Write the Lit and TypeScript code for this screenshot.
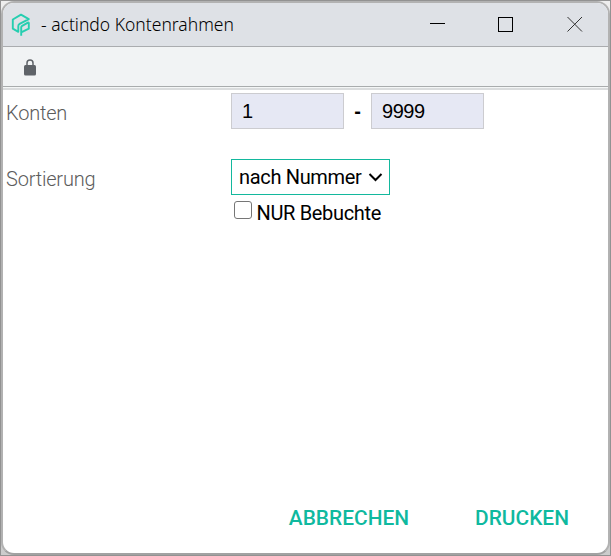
import { LitElement, html, css } from "lit";
import { customElement } from "lit/decorators.js";

@customElement("app-root")
class AppRoot extends LitElement {
  static styles = css`
    :host {
      display: block;
      box-sizing: border-box;
      width: 611px;
      height: 556px;
      padding: 0;
      border: 1px solid #929292;
      background: linear-gradient(#eeeeee, #cccccc);
      font-family: Roboto, "Liberation Sans", sans-serif;
      font-size: 20px;
      line-height: 24px;
      color: #000;
    }
    .window {
      box-sizing: border-box;
      height: 554px;
      border: 2px solid #b2b2b2;
      border-bottom-color: #a2a2a2;
      border-radius: 13px;
      background: #fff;
      overflow: hidden;
      display: flex;
      flex-direction: column;
    }
    .titlebar {
      box-sizing: border-box;
      height: 44px;
      flex: none;
      background: #dee1e6;
      border-bottom: 1px solid #aaacaf;
      display: flex;
      align-items: center;
      padding: 0 25px 0 8px;
    }
    .logo { flex: none; margin-top: 1px; }
    .title {
      flex: 1;
      margin: -2px 0 0 10px;
      font-family: "Noto Sans", "Open Sans", sans-serif;
      font-size: 17.5px;
      font-weight: 350;
      white-space: pre;
    }
    .controls { flex: none; display: block; margin-top: -2px; }
    .address {
      box-sizing: border-box;
      height: 40px;
      flex: none;
      background: #f1f3f4;
      border-bottom: 1px solid #a9acad;
      padding: 12px 0 0 21px;
    }
    .address svg { display: block; }
    .edge {
      height: 1px;
      flex: none;
      background: #f4f6f6;
      border-bottom: 2px solid #dadcdd;
    }
    .form {
      flex: 1;
      display: grid;
      grid-template-columns: 225px auto;
      grid-template-rows: 36px 36px;
      row-gap: 30px;
      padding: 3px 0 0 3px;
      align-content: start;
    }
    .label {
      font-weight: 300;
      color: #5c5c5c;
      padding-top: 8px;
      letter-spacing: -0.2px;
    }
    .range { display: flex; }
    .field {
      box-sizing: border-box;
      width: 113px;
      height: 36px;
      border: 1px solid #ccccd0;
      background: #e6e8f4;
      padding: 6px 10px;
      font-family: "Liberation Sans", Arial, sans-serif;
      line-height: 23px;
      letter-spacing: -0.45px;
    }
    .dash {
      width: 27px;
      text-align: center;
      line-height: 36px;
      font-family: "Liberation Sans", Arial, sans-serif;
      font-weight: 700;
    }
    .select {
      box-sizing: border-box;
      width: 159px;
      height: 36px;
      border: 1px solid #13b89d;
      display: flex;
      align-items: center;
      justify-content: space-between;
      padding: 0 6px 0 7px;
      white-space: nowrap;
      letter-spacing: -0.33px;
    }
    .check {
      display: flex;
      align-items: center;
      height: 36px;
      white-space: nowrap;
      letter-spacing: -0.33px;
    }
    .box {
      box-sizing: border-box;
      width: 18px;
      height: 18px;
      border: 1px solid #767676;
      border-radius: 3px;
      margin: -6px 4.5px 0 3px;
    }
    .actions {
      flex: none;
      display: flex;
      justify-content: flex-end;
      gap: 66px;
      padding: 0 39px 23px 0;
      color: #0fb99f;
      font-size: 20.9px;
      font-weight: 500;
    }
  `;

  render() {
    return html`
      <div class="window">
        <div class="titlebar">
          <svg class="logo" width="20" height="24" viewBox="0 0 20 24" fill="none" stroke="#26ceb0" stroke-width="1.9" stroke-linejoin="round">
            <path d="M7.3 18.8L1.8 15.7V6.5L10 1.6L17.8 6.1L8.6 10.9Q7.3 11.6 7.3 13Z" />
            <path d="M17.8 9.2V15.7L10.2 19.4V22.8M10.2 19.4V14.6Q10.2 13.4 11.2 12.8L17.8 9.2" />
          </svg>
          <span class="title">- actindo Kontenrahmen</span>
          <svg class="controls" width="153" height="16" viewBox="0 0 153 16" fill="none" stroke="#000">
            <path d="M0 7.5H15" />
            <rect x="68.5" y="1.5" width="14" height="14" />
            <path d="M137.5 1L152 15.5M152 1L137.5 15.5" stroke="#333" />
          </svg>
        </div>
        <div class="address">
          <svg width="12" height="17" viewBox="0 0 12 17">
            <path d="M3 7V4a3 3 0 0 1 6 0v3" fill="none" stroke="#5f6368" stroke-width="1.5" />
            <rect y="6" width="12" height="10.5" rx="1.5" fill="#5f6368" />
          </svg>
        </div>
        <div class="edge"></div>
        <div class="form">
          <div class="label">Konten</div>
          <div class="range">
            <div class="field">1</div>
            <div class="dash">-</div>
            <div class="field">9999</div>
          </div>
          <div class="label">Sortierung</div>
          <div>
            <div class="select">
              <span>nach Nummer</span>
              <svg width="15" height="10" viewBox="0 0 15 10" fill="none" stroke="#000" stroke-width="2">
                <path d="M1.5 2L7.5 8L13.5 2" />
              </svg>
            </div>
            <div class="check"><span class="box"></span><span>NUR Bebuchte</span></div>
          </div>
        </div>
        <div class="actions"><span>ABBRECHEN</span><span>DRUCKEN</span></div>
      </div>
    `;
  }
}
